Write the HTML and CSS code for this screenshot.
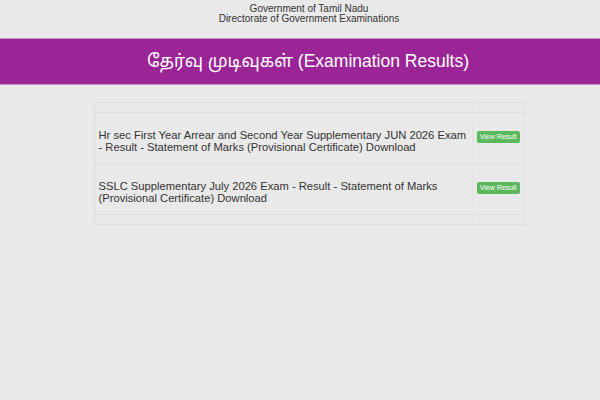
FILE: index.html
```html
<!DOCTYPE html>
<html>
<head>
<meta charset="utf-8">
<link rel="stylesheet" href="styles.css">
</head>
<body>
<div class="top">
  <div>Government of Tamil Nadu</div>
  <div>Directorate of Government Examinations</div>
</div>
<div class="banner">தேர்வு முடிவுகள் (Examination Results)</div>
<div class="wrap">
  <table class="results">
    <tr class="head"><td class="c1"></td><td class="c2"></td></tr>
    <tr class="row">
      <td class="c1">Hr sec First Year Arrear and Second Year Supplementary JUN 2026 Exam - Result - Statement of Marks (Provisional Certificate) Download</td>
      <td class="c2"><span class="btn">View Result</span></td>
    </tr>
    <tr class="row">
      <td class="c1">SSLC Supplementary July 2026 Exam - Result - Statement of Marks (Provisional Certificate) Download</td>
      <td class="c2"><span class="btn">View Result</span></td>
    </tr>
    <tr class="foot"><td class="c1"></td><td class="c2"></td></tr>
  </table>
</div>
</body>
</html>
```
FILE: styles.css
```css
html, body {
  margin: 0;
  padding: 0;
  background: #e9e9e9;
  font-family: "Liberation Sans", Arial, sans-serif;
  color: #333;
}
.top {
  text-align: center;
  font-size: 10px;
  line-height: 10px;
  padding-top: 4px;
  padding-left: 18px;
  height: 35px;
  box-sizing: border-box;
  color: #333;
}
.banner {
  background: #9b2596;
  color: #fff;
  height: 45px;
  display: flex;
  align-items: center;
  justify-content: center;
  padding-left: 16px;
  font-size: 17.5px;
  font-family: "Liberation Sans", "Noto Sans Tamil", "Noto Sans", sans-serif;
  border-top: 1px solid #c98fc6;
  border-bottom: 1px solid #c98fc6;
  margin-top: 3px;
}
.wrap {
  display: flex;
  justify-content: center;
  padding-top: 17px;
  padding-left: 18px;
}
.results {
  width: 431px;
  border-collapse: collapse;
  border: 1px solid #dcdcdc;
}
.results td {
  border-top: 1px solid #dcdcdc;
  border-bottom: 1px solid #dcdcdc;
  padding: 0 4px;
  font-size: 11.2px;
  line-height: 12px;
  vertical-align: middle;
  box-sizing: border-box;
}
.results .c2 {
  border-left: 1px solid #e3e3e3;
  width: 42px;
  padding: 0 4px;
}
.head td { height: 10px; }
.foot td { height: 10px; }
.row td { height: 51px; }
.row .c1 { padding-top: 6px; padding-bottom: 0; }
.row .c2 { padding-bottom: 4px; }
.btn {
  display: inline-block;
  vertical-align: middle;
  background: #5cb85c;
  color: #fff;
  font-size: 7px;
  line-height: 12px;
  padding: 0 3px;
  border-radius: 2px;
  white-space: nowrap;
}
```
